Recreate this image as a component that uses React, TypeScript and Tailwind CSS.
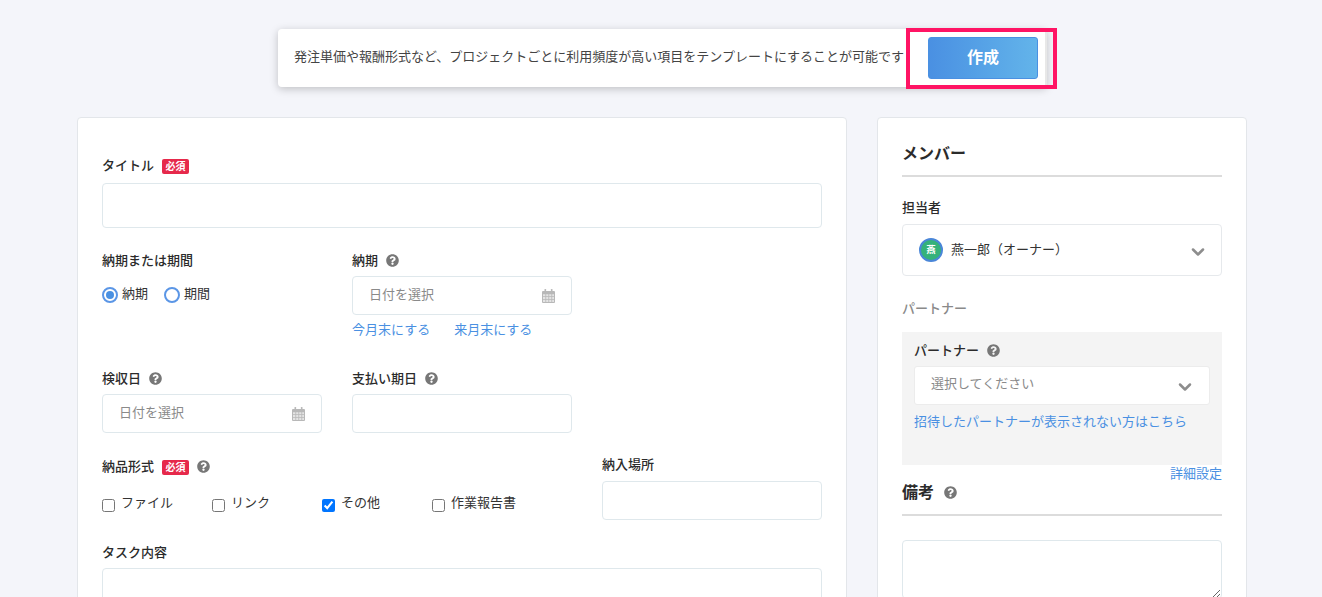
import { ChevronDown } from "lucide-react";
import { FaQuestionCircle } from "react-icons/fa";

const labelClass = "text-[13px] leading-[20px] font-medium text-[#2b2b2b]";
const inputClass = "h-[39px] w-full rounded-[4px] border border-[#dfe8ec] bg-white";
const linkClass = "text-[13px] leading-[20px] text-[#4a90e2]";

function Help() {
  return <FaQuestionCircle className="h-[13px] w-[13px] text-[#777]" />;
}

function Required() {
  return (
    <span className="flex h-[15px] w-[27px] translate-y-[1px] items-center justify-center rounded-[2px] bg-[#e6294b] text-[10px] leading-none font-bold text-white">
      必須
    </span>
  );
}

function CalendarIcon() {
  return (
    <svg viewBox="0 0 13 14" className="h-[14px] w-[13px]" fill="#b8b8b8">
      <rect x="2.5" y="0" width="1.6" height="3" rx="0.5" />
      <rect x="8.9" y="0" width="1.6" height="3" rx="0.5" />
      <path d="M1 2h11a1 1 0 0 1 1 1v10a1 1 0 0 1-1 1H1a1 1 0 0 1-1-1V3a1 1 0 0 1 1-1z" />
      <path
        d="M1 5.2h2.4v2H1zM4.2 5.2h2.2v2H4.200zM7.200 5.200h2.200v2H7.200zM10.200 5.200H12v2h-1.800zM1 8h2.400v2H1zM4.200 8h2.200v2H4.200zM7.200 8h2.200v2H7.200zM10.200 8H12v2h-1.800zM1 10.800h2.400V13H1zM4.200 10.800h2.200V13H4.200zM7.200 10.800h2.200V13H7.200zM10.200 10.800H12V13h-1.800z"
        fill="#e4e4e4"
      />
    </svg>
  );
}

function DateInput() {
  return (
    <div className={`${inputClass} flex items-center justify-between pr-4 pl-4`}>
      <span className="-translate-y-[2px] text-[13px] text-[#8a8a8a]">日付を選択</span>
      <CalendarIcon />
    </div>
  );
}

function Radio({ label, checked }: { label: string; checked?: boolean }) {
  return (
    <div className="flex items-center gap-[4px]">
      <span className="flex h-[16px] w-[16px] items-center justify-center rounded-full border-2 border-[#5b96e6] bg-white">
        {checked && <span className="h-[8px] w-[8px] rounded-full bg-[#4a90e2]" />}
      </span>
      <span className="-translate-y-[2px] text-[13px] leading-[16px] text-[#333]">{label}</span>
    </div>
  );
}

function Check({ label, checked }: { label: string; checked?: boolean }) {
  return (
    <label className="flex w-[110px] items-center gap-[6px]">
      <input type="checkbox" defaultChecked={checked} className="m-0 h-[13px] w-[13px] translate-y-[1px]" />
      <span className="-translate-y-[2px] text-[13px] leading-[20px] text-[#333]">{label}</span>
    </label>
  );
}

function Arrow() {
  return <ChevronDown className="h-[20px] w-[20px] text-[#8d8d8d]" strokeWidth={3} />;
}

export default function App() {
  return (
    <div
      className="h-[597px] overflow-hidden bg-[#f4f5fa]"
      style={{ fontFamily: '"Noto Sans CJK JP", "Noto Sans", sans-serif' }}
    >
      {/* template banner */}
      <div className="flex justify-center pt-[29px] pl-[3px]">
        <div className="relative flex h-[58px] w-[769px] items-center rounded-[4px] bg-white pl-4 shadow-[0_2px_8px_rgba(0,0,0,0.22)]">
          <p className="w-[634px] -translate-y-[2px] text-[13px] whitespace-nowrap text-[#444]">
            発注単価や報酬形式など、プロジェクトごとに利用頻度が高い項目をテンプレートにすることが可能です
          </p>
          <button className="h-[42px] w-[110px] rounded-[3px] border border-[#4a90e2] bg-gradient-to-r from-[#4a90e2] to-[#63b4ea] pb-[5px] text-[16px] font-bold text-white">
            作成
          </button>
          <div className="ml-auto h-full w-[2px] bg-[#e8e8e8]" />
          <div className="absolute top-[-1px] left-[628px] h-[61px] w-[151px] border-[4px] border-[#ff1464]" />
        </div>
      </div>

      <div className="mt-[30px] flex justify-center gap-[30px] pl-[2px]">
        {/* main form */}
        <div className="w-[770px] shrink-0 rounded-t-[4px] border border-[#e3e6ea] bg-white px-6 pt-[37px]">
          <div className="flex h-[20px] items-center gap-2">
            <span className={labelClass}>タイトル</span>
            <Required />
          </div>
          <div className={`${inputClass} mt-[8px] h-[45px]`} />

          <div className="mt-[22px] grid grid-cols-[220px_220px_220px] gap-x-[30px]">
            <div>
              <div className={labelClass}>納期または期間</div>
              <div className="mt-[17px] flex gap-[16px]">
                <Radio label="納期" checked />
                <Radio label="期間" />
              </div>
            </div>
            <div>
              <div className="flex h-[20px] items-center gap-[8px]">
                <span className={labelClass}>納期</span>
                <Help />
              </div>
              <div className="mt-[6px]">
                <DateInput />
              </div>
              <div className="mt-[4px] flex gap-[24px]">
                <span className={linkClass}>今月末にする</span>
                <span className={linkClass}>来月末にする</span>
              </div>
            </div>
          </div>

          <div className="mt-[29px] grid grid-cols-[220px_220px_220px] gap-x-[30px]">
            <div>
              <div className="flex h-[20px] items-center gap-[8px]">
                <span className={labelClass}>検収日</span>
                <Help />
              </div>
              <div className="mt-[6px]">
                <DateInput />
              </div>
            </div>
            <div>
              <div className="flex h-[20px] items-center gap-[8px]">
                <span className={labelClass}>支払い期日</span>
                <Help />
              </div>
              <div className={`${inputClass} mt-[6px]`} />
            </div>
          </div>

          <div className="mt-[24px] flex justify-between">
            <div>
              <div className="flex h-[20px] -translate-y-[1px] items-center gap-2">
                <span className={labelClass}>納品形式</span>
                <Required />
                <Help />
              </div>
              <div className="mt-[17px] flex">
                <Check label="ファイル" />
                <Check label="リンク" />
                <Check label="その他" checked />
                <Check label="作業報告書" />
              </div>
            </div>
            <div className="w-[220px] -translate-y-[2px]">
              <div className={`${labelClass} -translate-y-[1px]`}>納入場所</div>
              <div className={`${inputClass} mt-[6px]`} />
            </div>
          </div>

          <div className={`${labelClass} mt-[20px]`}>タスク内容</div>
          <div className={`${inputClass} mt-[6px] h-[60px]`} />
        </div>

        {/* members sidebar */}
        <div className="w-[370px] shrink-0 rounded-t-[4px] border border-[#e3e6ea] bg-white px-6 pt-[22px]">
          <h2 className="border-b-2 border-[#dcdcdc] pb-[11px] text-[16px] leading-[24px] font-bold text-[#2b2b2b]">
            メンバー
          </h2>
          <div className={`${labelClass} mt-[20px]`}>担当者</div>
          <div className="mt-[7px] flex h-[52px] items-center rounded-[4px] border border-[#e6e9ec] pr-[13px] pl-4">
            <span className="flex h-[24px] w-[24px] items-center justify-center rounded-full border-2 border-[#4a86d8] bg-[#35b27a] text-[9px] font-bold text-white">
              燕
            </span>
            <span className="ml-2 -translate-y-[1px] text-[13px] text-[#333]">燕一郎（オーナー）</span>
            <span className="ml-auto translate-y-[2px]">
              <Arrow />
            </span>
          </div>

          <div className="mt-[22px] text-[13px] leading-[20px] font-medium text-[#8a8a8a]">パートナー</div>

          <div className="mt-[14px] h-[133px] bg-[#f4f4f4] px-3 pt-[8px]">
            <div className="flex h-[20px] items-center gap-[8px]">
              <span className={labelClass}>パートナー</span>
              <Help />
            </div>
            <div className="mt-[6px] flex h-[39px] items-center justify-between rounded-[3px] border border-[#ececec] bg-white pr-[14px] pl-4">
              <span className="-translate-y-[3px] text-[13px] text-[#8a8a8a]">選択してください</span>
              <span className="translate-y-[1px]">
                <Arrow />
              </span>
            </div>
            <div className={`${linkClass} mt-[6px]`}>招待したパートナーが表示されない方はこちら</div>
          </div>

          <div className="text-right text-[13px] leading-[16px] text-[#4a90e2]">詳細設定</div>

          <div className="-mt-px flex items-center gap-[10px] border-b-2 border-[#dcdcdc] pb-[10px]">
            <h2 className="-translate-y-[1px] text-[16px] leading-[24px] font-bold text-[#2b2b2b]">備考</h2>
            <Help />
          </div>
          <textarea className="mt-[24px] block h-[59px] w-full rounded-[4px] border border-[#dfe8ec] bg-white" />
        </div>
      </div>
    </div>
  );
}
